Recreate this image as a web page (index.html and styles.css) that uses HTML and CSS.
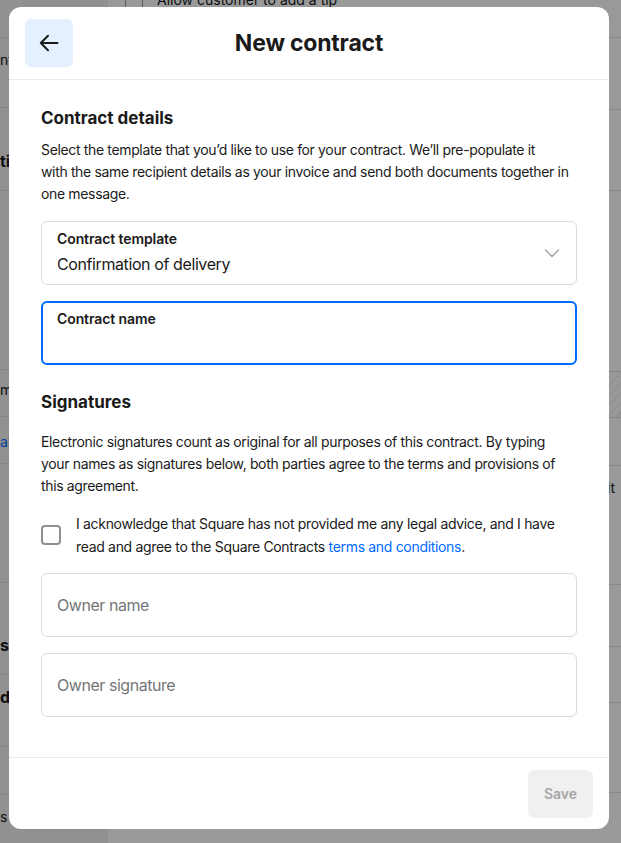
FILE: index.html
```html
<!DOCTYPE html>
<html lang="en">
<head>
<meta charset="utf-8">
<title>New contract</title>
<link rel="stylesheet" href="styles.css">
</head>
<body>
<div class="page">
  <aside class="side">
    <div class="srow s1"></div>
    <div class="srow s2"><span>nt</span></div>
    <div class="srow s3 strong"><span>ti</span></div>
    <div class="srow s4"></div>
    <div class="srow s5"><span>ma</span></div>
    <div class="srow s6 blue"><span>al</span></div>
    <div class="srow s7"></div>
    <div class="srow s8 strong"><span>s</span></div>
    <div class="srow s9 strong"><span>dr</span></div>
    <div class="srow s10"></div>
    <div class="srow s11"><span>s</span></div>
  </aside>
  <div class="bgmain">
    <div class="mrow tiprow"><span class="bgbox"></span><span>Allow customer to add a tip</span></div>
    <div class="mrow m2"></div>
    <div class="mrow m3"></div>
    <div class="mrow m4"></div>
    <div class="mrow hatch"></div>
    <div class="mrow m6"></div>
    <div class="mrow m7 blue"><span>Edit</span></div>
    <div class="mrow m8"></div>
    <div class="mrow m9"></div>
    <div class="mrow m10"></div>
  </div>
</div>

<div class="modal" role="dialog" aria-label="New contract">
  <header class="modal-head">
    <button class="back" aria-label="Back">
      <svg width="24" height="24" viewBox="0 0 24 24" fill="none" stroke="#1a1a1a" stroke-width="2" stroke-linecap="round" stroke-linejoin="round"><path d="M20.5 12H3.8M11 4.8L3.8 12l7.2 7.2"/></svg>
    </button>
    <h1 class="title">New contract</h1>
  </header>

  <div class="modal-body">
    <h2 class="section-title first">Contract details</h2>
    <p class="desc">Select the template that you’d like to use for your contract. We’ll pre-populate it<br>with the same recipient details as your invoice and send both documents together in<br>one message.</p>

    <div class="field select">
      <div class="field-text">
        <div class="label">Contract template</div>
        <div class="value">Confirmation of delivery</div>
      </div>
      <svg class="chev" width="16" height="10" viewBox="0 0 16 10" fill="none" stroke="#a3a3a3" stroke-width="1.4" stroke-linecap="round" stroke-linejoin="round"><path d="M1.5 2l6.5 6.5L14.5 2"/></svg>
    </div>

    <div class="field focused">
      <div class="field-text">
        <div class="label">Contract name</div>
      </div>
    </div>

    <h2 class="section-title second">Signatures</h2>
    <p class="desc desc2">Electronic signatures count as original for all purposes of this contract. By typing<br>your names as signatures below, both parties agree to the terms and provisions of<br>this agreement.</p>

    <div class="check-row">
      <span class="checkbox"></span>
      <p class="check-text">I acknowledge that Square has not provided me any legal advice, and I have read and agree to the Square Contracts <a href="#" class="link">terms and conditions</a>.</p>
    </div>

    <div class="field input"><span class="placeholder">Owner name</span></div>
    <div class="field input"><span class="placeholder">Owner signature</span></div>
  </div>

  <footer class="modal-foot">
    <button class="save" disabled>Save</button>
  </footer>
</div>
</body>
</html>
```

FILE: styles.css
```css
* { box-sizing: border-box; }
html, body { margin: 0; padding: 0; }
body {
  font-family: Inter, "Noto Sans", sans-serif;
  color: #1a1a1a;
  width: 621px;
  height: 843px;
  overflow: hidden;
  position: relative;
}

/* background page (dimmed) */
.page {
  display: flex;
  height: 843px;
  background: #999999;
  overflow: hidden;
}
.side {
  width: 108px;
  flex-shrink: 0;
  background: #919191;
}
.srow {
  border-bottom: 1px solid #868686;
  font-size: 14px;
  line-height: 20px;
  color: #0f0f0f;
  white-space: nowrap;
  overflow: hidden;
}
.strong { font-weight: 700; font-size: 16px; }
.blue { color: #003f99; }
.s1 { height: 38px; }
.s2 { height: 70px; padding-top: 12px; }
.s3 { height: 83px; padding-top: 43px; }
.s4 { height: 179px; }
.s5 { height: 47px; padding-top: 10px; }
.s6 { height: 47px; padding-top: 15px; }
.s7 { height: 119px; }
.s8 { height: 92px; padding-top: 52px; }
.s9 { height: 72px; padding-top: 12px; }
.s10 { height: 48px; }
.s11 { height: 48px; padding-top: 12px; border-bottom: 0; }

.bgmain { flex: 1; }
.mrow {
  border-bottom: 1px solid #878787;
  font-size: 14px;
  line-height: 20px;
  color: #0f0f0f;
  white-space: nowrap;
  overflow: hidden;
}
.tiprow {
  display: flex;
  align-items: flex-start;
  gap: 14px;
  padding-left: 17px;
  margin-top: -10px;
  height: 48px;
}
.bgbox {
  width: 18px;
  height: 18px;
  border: 1px solid #5c5c5c;
  border-radius: 2px;
  margin-top: 1px;
  flex-shrink: 0;
}
.m2 { height: 72px; }
.m3 { height: 81px; }
.m4 { height: 181px; }
.hatch {
  height: 46px;
  background: repeating-linear-gradient(135deg, #999 0 6px, #8a8a8a 6px 7px);
}
.m6 { height: 48px; }
.m7 { height: 119px; padding-top: 12px; padding-left: 482px; }
.m8 { height: 62px; }
.m9 { height: 56px; }
.m10 { height: 90px; }

/* modal */
.modal {
  position: absolute;
  left: 9px;
  top: 7px;
  width: 600px;
  height: 822px;
  background: #ffffff;
  border-radius: 12px;
  display: flex;
  flex-direction: column;
  overflow: hidden;
}
.modal-head {
  position: relative;
  height: 73px;
  flex-shrink: 0;
  border-bottom: 1px solid #ebebeb;
  display: flex;
  align-items: center;
  justify-content: center;
}
.back {
  position: absolute;
  left: 16px;
  top: 12px;
  width: 48px;
  height: 48px;
  border: 0;
  border-radius: 6px;
  background: #e5f0ff;
  display: flex;
  align-items: center;
  justify-content: center;
  padding: 0;
}
.title {
  margin: 0;
  font-size: 23px;
  font-weight: 700;
  letter-spacing: -0.2px;
  color: #1a1a1a;
}

.modal-body {
  flex: 1;
  padding: 24px 32px 0;
}
.section-title {
  margin: 0;
  font-size: 17px;
  line-height: 28px;
  font-weight: 700;
  color: #1a1a1a;
}
.section-title.second { margin-top: 23px; }
.desc {
  margin: 7px 0 16px;
  font-size: 14px;
  line-height: 22px;
  letter-spacing: -0.35px;
  color: #1a1a1a;
  white-space: nowrap;
}
.desc2 { margin-top: 15px; margin-bottom: 15px; }

.field {
  height: 64px;
  border: 1px solid #dadada;
  border-radius: 6px;
  margin-bottom: 16px;
  display: flex;
  align-items: center;
  padding: 0 16px 0 15px;
}
.field-text { flex: 1; align-self: flex-start; padding-top: 8px; }
.label {
  font-size: 14px;
  line-height: 18px;
  font-weight: 600;
  letter-spacing: -0.1px;
  color: #1a1a1a;
}
.value {
  font-size: 16px;
  line-height: 24px;
  margin-top: 4px;
  letter-spacing: -0.4px;
  color: #1a1a1a;
}
.focused {
  border: 2px solid #006aff;
  padding: 0 15px 0 14px;
}
.focused .field-text { padding-top: 7px; }

.check-row {
  display: flex;
  gap: 15px;
  align-items: center;
  margin-bottom: 15px;
}
.checkbox {
  width: 20px;
  height: 20px;
  border: 2px solid #8f8f8f;
  border-radius: 4px;
  flex-shrink: 0;
}
.check-text {
  margin: 0;
  font-size: 14px;
  line-height: 23px;
  letter-spacing: -0.32px;
  color: #1a1a1a;
}
.link { color: #006aff; text-decoration: none; }

.placeholder {
  font-size: 16px;
  letter-spacing: -0.45px;
  color: #767676;
}

.modal-foot {
  height: 72px;
  flex-shrink: 0;
  border-top: 1px solid #ebebeb;
  display: flex;
  align-items: center;
  justify-content: flex-end;
  padding: 0 16px;
}
.save {
  width: 65px;
  height: 48px;
  border: 0;
  border-radius: 6px;
  background: #f0f0f0;
  color: #a6a6a6;
  font-family: inherit;
  font-size: 14px;
  font-weight: 600;
}
```
